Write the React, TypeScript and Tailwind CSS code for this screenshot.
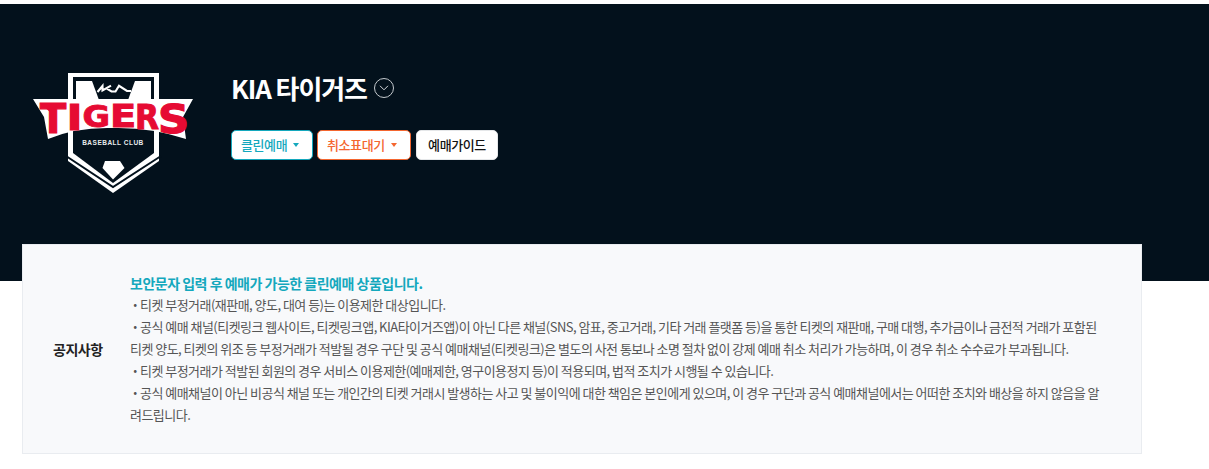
const font = { fontFamily: '"Noto Sans CJK KR", "Noto Sans", sans-serif' };

function Logo() {
  const letter = (ch: string, x: number, sx: number, sy: number, base: number) => (
    <text
      transform={`translate(${x} ${base}) scale(${sx} ${sy})`}
      fontFamily="'DejaVu Sans', sans-serif"
      fontWeight="700"
      fontSize="24"
      fill="#e60b33"
      stroke="#e60b33"
      strokeWidth="0.7"
    >
      {ch}
    </text>
  );
  return (
    <svg width="170" height="130" viewBox="28 68 170 130" className="shrink-0">
      <polygon points="68,73 159,73 159,161 113,193 68,161" fill="#fff" />
      <polyline points="66,156 113,187 161,156" fill="none" stroke="#03111c" strokeWidth="2" />
      <polygon points="73,77 154,77 154,153 113,183 73,153" fill="#03111c" />
      <polygon points="76,81 92,81 99,100 76,100" fill="#fff" />
      <polygon points="151,81 135,81 128,100 151,100" fill="#fff" />
      <polygon points="105,161 120,161 124.5,168 113,179.5 102.5,168" fill="#fff" />
      <path
        d="M97.5 92 L102.5 86 V90.5 L111 85.6 M106.5 88.4 L111.5 91.5 H115.5 L119 85.8 L127 91 H131"
        fill="none"
        stroke="#fff"
        strokeWidth="2.1"
      />
      <path d="M33 99 H193 L183 117 L186 139 Q150 127 113 128 Q76 127 48 139 L44 117 Z" fill="#fff" />
      <polygon points="40,103 50,103 52,114" fill="#e60b33" />
      {letter("T", 40, 1.6, 1.71, 133)}
      {letter("I", 66.5, 1.8, 1.49, 129.5)}
      {letter("G", 82.5, 1.4, 1.28, 126.5)}
      {letter("E", 110, 1.6, 1.31, 126.5)}
      {letter("R", 135, 1.3, 1.43, 128.5)}
      {letter("S", 158, 1.8, 1.66, 133)}
      <text
        x="113"
        y="144.5"
        textAnchor="middle"
        fontFamily="'Liberation Sans', sans-serif"
        fontWeight="700"
        fontSize="6.5"
        letterSpacing="0.5"
        fill="#e8ebee"
      >
        BASEBALL CLUB
      </text>
    </svg>
  );
}

function Caret({ className }: { className: string }) {
  return <span className={`ml-[6px] inline-block h-0 w-0 border-x-[3px] border-t-[4px] border-x-transparent ${className}`} />;
}

const lines: [boolean, string][] = [
  [true, "티켓 부정거래(재판매, 양도, 대여 등)는 이용제한 대상입니다."],
  [true, "공식 예매 채널(티켓링크 웹사이트, 티켓링크앱, KIA타이거즈앱)이 아닌 다른 채널(SNS, 암표, 중고거래, 기타 거래 플랫폼 등)을 통한 티켓의 재판매, 구매 대행, 추가금이나 금전적 거래가 포함된"],
  [false, "티켓 양도, 티켓의 위조 등 부정거래가 적발될 경우 구단 및 공식 예매채널(티켓링크)은 별도의 사전 통보나 소명 절차 없이 강제 예매 취소 처리가 가능하며, 이 경우 취소 수수료가 부과됩니다."],
  [true, "티켓 부정거래가 적발된 회원의 경우 서비스 이용제한(예매제한, 영구이용정지 등)이 적용되며, 법적 조치가 시행될 수 있습니다."],
  [true, "공식 예매채널이 아닌 비공식 채널 또는 개인간의 티켓 거래시 발생하는 사고 및 불이익에 대한 책임은 본인에게 있으며, 이 경우 구단과 공식 예매채널에서는 어떠한 조치와 배상을 하지 않음을 알"],
  [false, "려드립니다."],
];

export default function App() {
  return (
    <div className="min-h-[469px] bg-white pt-1" style={font}>
      <header className="h-[277px] bg-[#03111c]">
        <div className="flex items-start pl-[28px] pt-[64px]">
          <Logo />
          <div className="ml-[33px] pt-[2px]">
            <div className="flex h-[36px] items-center">
              <h1 className="text-[26px] leading-[36px] font-bold tracking-[-1.1px] text-white">KIA 타이거즈</h1>
              <span className="ml-[7px] flex h-[20px] w-[20px] items-center justify-center rounded-full border border-[#c5cace]">
                <svg width="10" height="6" viewBox="0 0 10 6" fill="none" stroke="#d5d9dc" strokeWidth="1">
                  <path d="M1 .8 L5 4.8 L9 .8" />
                </svg>
              </span>
            </div>
            <div className="mt-[24px] flex gap-[4px] text-[13px] font-medium tracking-[-0.4px]">
              <button className="flex h-[30px] w-[82px] items-center justify-start rounded-[5px] border border-[#14a8bd] bg-white pb-px pl-[9px] text-[#14a8bd]">
                클린예매
                <Caret className="border-t-[#14a8bd]" />
              </button>
              <button className="flex h-[30px] w-[94px] items-center justify-start rounded-[5px] border border-[#f4662f] bg-white pb-px pl-[9px] text-[#f4662f]">
                취소표대기
                <Caret className="border-t-[#f4662f]" />
              </button>
              <button className="ml-px h-[30px] w-[82px] rounded-[5px] border border-[#e5e7e9] bg-white pb-px text-[#111]">예매가이드</button>
            </div>
          </div>
        </div>
      </header>
      <section className="mx-[22px] -mt-[37px] flex h-[210px] w-[1120px] items-center border border-[#e9ecf0] bg-[#f8f9fb]">
        <div className="w-[107px] pl-[30px] text-[14px] leading-[22px] font-bold tracking-[-0.5px] text-[#222]">공지사항</div>
        <div className="text-[13px] leading-[22px] tracking-[-0.53px] whitespace-nowrap text-[#555]">
          <p className="text-[14px] font-bold tracking-[-0.5px] text-[#14a8bd]">보안문자 입력 후 예매가 가능한 클린예매 상품입니다.</p>
          {lines.map(([bullet, l]) => (
            <p key={l}>
              {bullet && <span className="inline-block w-[10px] text-center font-black">·</span>}
              {l}
            </p>
          ))}
        </div>
      </section>
    </div>
  );
}
